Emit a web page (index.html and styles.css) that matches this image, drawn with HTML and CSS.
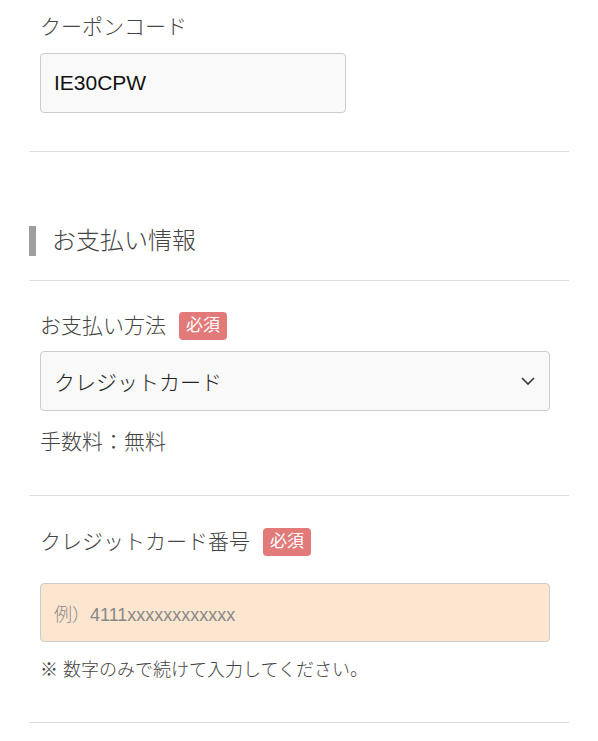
FILE: index.html
```html
<!DOCTYPE html>
<html lang="ja">
<head>
<meta charset="utf-8">
<title>お支払い情報</title>
<link rel="stylesheet" href="styles.css">
</head>
<body>
<div class="page">
  <section class="block block-coupon">
    <div class="label">クーポンコード</div>
    <div class="field field-coupon">IE30CPW</div>
  </section>
  <div class="divider"></div>
  <h2 class="heading">お支払い情報</h2>
  <div class="divider"></div>
  <section class="block block-method">
    <div class="label-row"><span class="label">お支払い方法</span><span class="badge">必須</span></div>
    <div class="field field-select">
      <span>クレジットカード</span>
      <svg class="chevron" width="14" height="8" viewBox="0 0 14 8"><polyline points="1,1 7,7 13,1" fill="none" stroke="#333" stroke-width="1.6"/></svg>
    </div>
    <div class="fee">手数料：無料</div>
  </section>
  <div class="divider"></div>
  <section class="block block-card">
    <div class="label-row"><span class="label">クレジットカード番号</span><span class="badge">必須</span></div>
    <div class="field field-card">例）4111xxxxxxxxxxxx</div>
    <div class="note">※ 数字のみで続けて入力してください。</div>
  </section>
  <div class="divider"></div>
</div>
</body>
</html>
```

FILE: styles.css
```css
* { box-sizing: border-box; }
html, body { margin: 0; padding: 0; background: #fff; }
body {
  font-family: "Liberation Sans", "Noto Sans CJK JP", sans-serif;
  font-weight: 300;
  color: #444;
}
.page { padding: 0 29px; }
.block { padding: 0 19px 0 11px; }
.block-coupon { padding-top: 12px; padding-bottom: 38px; }
.block-method { padding-top: 30px; padding-bottom: 38px; }
.block-card { padding-top: 31px; padding-bottom: 39px; }
.label { font-size: 21px; line-height: 30px; color: #444; }
.label-row { display: flex; align-items: center; height: 30px; }
.badge {
  margin-left: 13px;
  background: #e27a7a;
  color: #fff;
  font-size: 17px;
  font-weight: 400;
  line-height: 28px;
  height: 28px;
  padding: 0 7px;
  border-radius: 4px;
}
.field {
  height: 60px;
  border: 1px solid #cccccc;
  border-radius: 4px;
  background: #f9f9f9;
  display: flex;
  align-items: center;
  padding: 0 14px 0 13px;
  font-size: 21px;
  font-weight: 400;
  color: #111;
}
.field-coupon { width: 306px; margin-top: 11px; }
.field-select { margin-top: 10px; justify-content: space-between; color: #222; font-weight: 300; }
.chevron { display: block; }
.fee { margin-top: 16px; font-size: 21px; line-height: 30px; color: #444; }
.field-card {
  margin-top: 26px;
  height: 59px;
  background: #fde6cf;
  font-size: 18px;
  font-weight: 300;
  color: #888;
}
.note { margin-top: 15px; font-size: 18px; line-height: 26px; color: #444; }
.divider { height: 1px; background: #dddddd; }
.heading {
  margin: 74px 0 24px;
  height: 30px;
  border-left: 7px solid #9e9e9e;
  padding-left: 16px;
  font-size: 24px;
  line-height: 30px;
  font-weight: 300;
  color: #444;
}
```
